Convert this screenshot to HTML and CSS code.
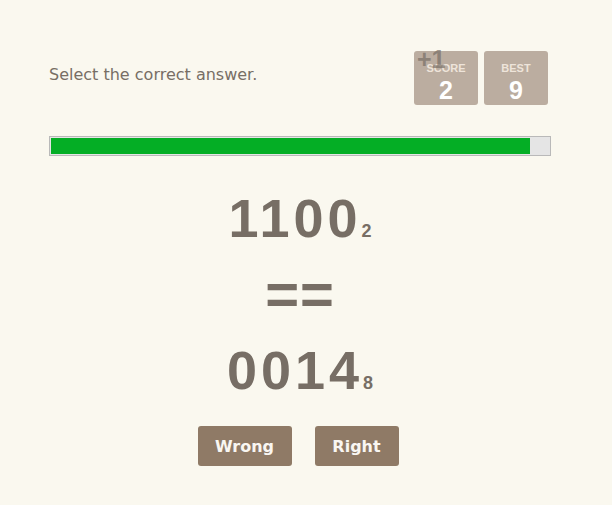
FILE: index.html
```html
<!DOCTYPE html>
<html>
<head>
<meta charset="utf-8">
<link rel="stylesheet" href="styles.css">
</head>
<body>
<div class="game">
  <div class="header">
    <div class="prompt">Select the correct answer.</div>
    <div class="scores">
      <div class="box">
        <div class="label">SCORE</div>
        <div class="value">2</div>
        <div class="plus">+1</div>
      </div>
      <div class="box">
        <div class="label">BEST</div>
        <div class="value">9</div>
      </div>
    </div>
  </div>
  <div class="progress"><div class="fill" style="width: 96.2%"></div></div>
  <div class="equation">
    <div class="num">1100<span class="base">2</span></div>
    <div class="num eq">==</div>
    <div class="num">0014<span class="base">8</span></div>
  </div>
  <div class="buttons">
    <button class="btn wrong">Wrong</button>
    <button class="btn right">Right</button>
  </div>
</div>
</body>
</html>
```
FILE: styles.css
```css
html, body {
  margin: 0;
  padding: 0;
  background: #faf8ef;
}
body {
  color: #776e65;
  font-family: "DejaVu Sans", Verdana, sans-serif;
}
.game {
  width: 502px;
  margin-left: 49px;
  padding-top: 51px;
}
.header {
  display: flex;
  justify-content: space-between;
  align-items: center;
  padding-right: 3px;
}
.prompt {
  font-size: 16px;
  margin-top: -8px;
}
.scores {
  display: flex;
  gap: 6px;
}
.box {
  position: relative;
  width: 64px;
  height: 54px;
  background: #bbada0;
  border-radius: 3px;
  text-align: center;
  font-family: "Liberation Sans", Arial, sans-serif;
  font-weight: bold;
  box-sizing: border-box;
  padding-top: 11px;
}
.label {
  font-size: 11px;
  color: #eee4da;
  line-height: 13px;
}
.value {
  font-size: 25px;
  color: #fff;
  line-height: 30px;
}
.plus {
  position: absolute;
  left: 3px;
  top: -6px;
  font-size: 25px;
  font-weight: bold;
  color: rgba(119, 110, 101, 0.7);
}
.progress {
  margin-top: 31px;
  height: 20px;
  border: 1px solid #b9b9b9;
  background: #e5e5e5;
  box-sizing: border-box;
  padding: 1px;
}
.fill {
  height: 100%;
  background: #04ae25;
}
.equation {
  margin-top: 24px;
  text-align: center;
  font-family: "Liberation Sans", Arial, sans-serif;
  font-weight: bold;
}
.num {
  font-size: 54px;
  line-height: 76px;
  letter-spacing: 4px;
  color: #776e65;
}
.eq {
  letter-spacing: 1px;
  font-size: 58px;
}
.base {
  font-size: 18px;
  line-height: 0;
  letter-spacing: 0;
}
.buttons {
  margin-top: 18px;
  display: flex;
  justify-content: center;
  gap: 23px;
  padding-right: 4px;
}
.btn {
  height: 40px;
  border: none;
  border-radius: 3px;
  background: #8f7a66;
  color: #f9f6f2;
  font-family: "DejaVu Sans", Tahoma, sans-serif;
  font-weight: bold;
  font-size: 16px;
  padding: 0;
}
.wrong { width: 94px; }
.right { width: 84px; }
```
